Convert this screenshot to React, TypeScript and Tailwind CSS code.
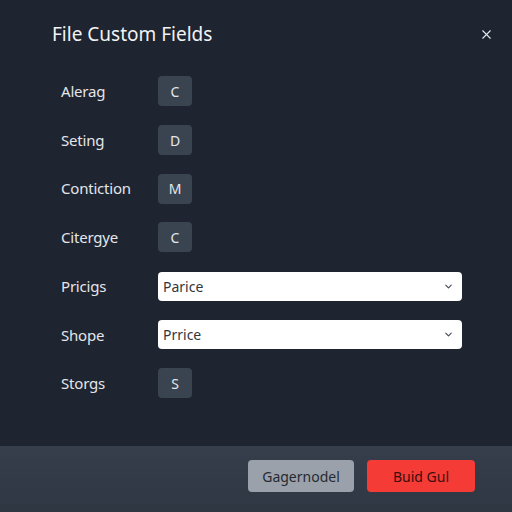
import { ChevronDown, X } from "lucide-react"

type Field = { label: string; badge?: string; select?: string }

const FIELDS: Field[] = [
  { label: "Alerag", badge: "C" },
  { label: "Seting", badge: "D" },
  { label: "Contiction", badge: "M" },
  { label: "Citergye", badge: "C" },
  { label: "Pricigs", select: "Parice" },
  { label: "Shope", select: "Prrice" },
  { label: "Storgs", badge: "S" },
]

export default function App() {
  return (
    <div
      className="flex h-[512px] w-[512px] flex-col overflow-hidden bg-[#1e2430] text-[#e8eaee]"
      style={{ fontFamily: '"Noto Sans", "Open Sans", sans-serif' }}
    >
      {/* Header */}
      <div className="flex items-center justify-between pl-[52px] pr-[18px] pt-[21px]">
        <h2 className="text-[19px] font-normal leading-[26px] text-[#f2f3f5]">
          File Custom Fields
        </h2>
        <X className="h-[15px] w-[15px] text-[#e5e7eb]" strokeWidth={1.75} />
      </div>

      {/* Field rows */}
      <div className="mt-[20px] flex flex-1 flex-col pl-[61px]">
        {FIELDS.map((f, i) => (
          <div key={i} className="flex h-[48.7px] items-center">
            <span className="w-[97px] text-[15px] tracking-[-0.2px] text-[#e4e6ea]">{f.label}</span>
            {f.select ? (
              <div className="flex h-[29px] w-[304px] items-center justify-between rounded-[4px] bg-white pl-[5px] pr-[8px]">
                <span className="text-[14px] text-[#33363e]">{f.select}</span>
                <ChevronDown className="h-[11px] w-[11px] text-[#444a55]" strokeWidth={2.5} />
              </div>
            ) : (
              <div className="flex h-[30px] w-[34px] items-center justify-center rounded-[4px] bg-[#3a4450] text-[14px] text-[#e4e7eb]">
                {f.badge}
              </div>
            )}
          </div>
        ))}
      </div>

      {/* Footer */}
      <div className="flex h-[66px] items-start justify-end gap-[13px] bg-gradient-to-b from-[#353e4a] to-[#2f3743] pr-[37px] pt-[14px]">
        <button className="h-[32px] w-[106px] rounded-[4px] bg-[#9aa1ab] text-[14px] text-[#262a31]">
          Gagernodel
        </button>
        <button className="h-[32px] w-[108px] rounded-[4px] bg-[#f43b36] text-[14px] text-[#3a0f0e]">
          Buid Gul
        </button>
      </div>
    </div>
  )
}
